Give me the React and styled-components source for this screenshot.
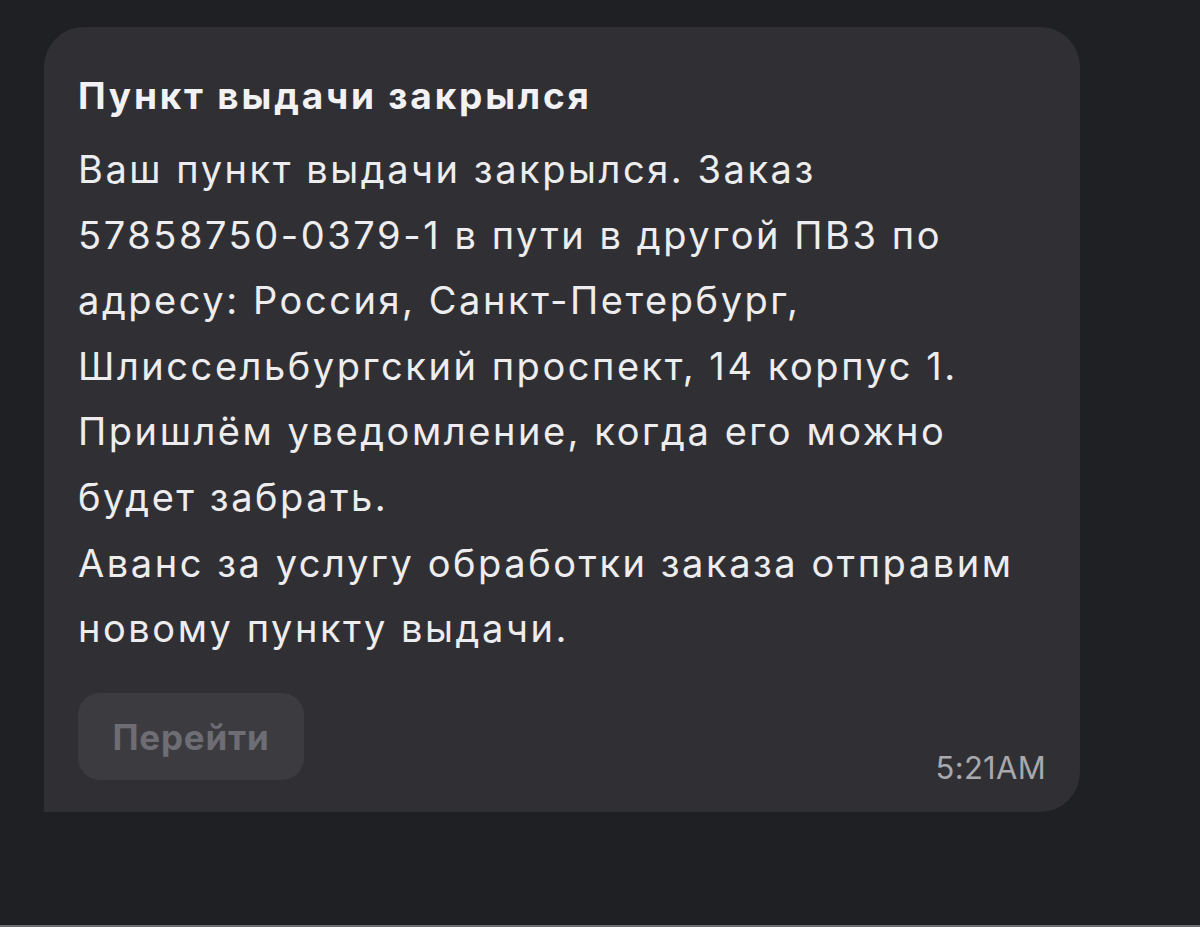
import React from "react";
import styled, { createGlobalStyle } from "styled-components";

const Global = createGlobalStyle`
  html, body { margin: 0; padding: 0; background: #1e2024; }
  body { font-family: Inter, "Noto Sans", sans-serif; -webkit-font-smoothing: antialiased; }
`;

const Page = styled.div`
  width: 1200px;
  height: 927px;
  box-sizing: border-box;
  padding: 27px 0 0 44px;
  background: #1e2024;
  border-bottom: 2px solid #6a6c70;
`;

const Bubble = styled.div`
  width: 1036px;
  height: 785px;
  box-sizing: border-box;
  background: #303034;
  border-radius: 40px 40px 40px 0;
  padding: 50px 34px 32px 34px;
  display: flex;
  flex-direction: column;
`;

const Title = styled.div`
  color: #f2f2f4;
  font-weight: 700;
  font-size: 37px;
  line-height: 38px;
  letter-spacing: 2.8px;
`;

const Body = styled.div`
  margin-top: 22px;
  color: #ededef;
  font-size: 38px;
  line-height: 65.6px;
  font-weight: 400;
  letter-spacing: 2.55px;
`;

const Footer = styled.div`
  margin-top: auto;
  display: flex;
  align-items: flex-end;
  justify-content: space-between;
`;

const Button = styled.div`
  width: 226px;
  height: 87px;
  border-radius: 22px;
  background: #3b3b40;
  color: #6d6d73;
  font-weight: 700;
  font-size: 35px;
  letter-spacing: 0.8px;
  display: flex;
  align-items: center;
  justify-content: center;
`;

const Time = styled.div`
  color: #a8a8ad;
  font-size: 31px;
  line-height: 32px;
  margin-right: 0px;
  margin-bottom: -4px;
  letter-spacing: 0.3px;
`;

const lines = [
  "Ваш пункт выдачи закрылся. Заказ",
  "57858750-0379-1 в пути в другой ПВЗ по",
  "адресу: Россия, Санкт-Петербург,",
  "Шлиссельбургский проспект, 14 корпус 1.",
  "Пришлём уведомление, когда его можно",
  "будет забрать.",
  "Аванс за услугу обработки заказа отправим",
  "новому пункту выдачи.",
];

export default function App() {
  return (
    <>
      <Global />
      <Page>
        <Bubble>
          <Title>Пункт выдачи закрылся</Title>
          <Body>
            {lines.map((l, i) => (
              <div key={i}>{l}</div>
            ))}
          </Body>
          <Footer>
            <Button>Перейти</Button>
            <Time>5:21AM</Time>
          </Footer>
        </Bubble>
      </Page>
    </>
  );
}
